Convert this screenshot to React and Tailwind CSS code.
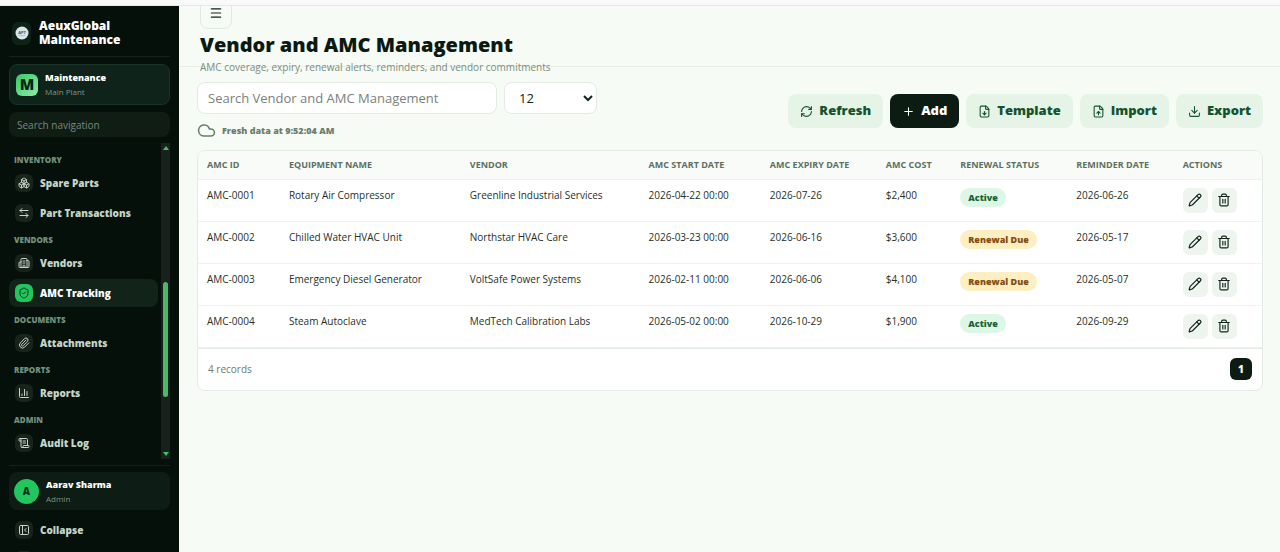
import {
  ArrowLeftRight,
  Boxes,
  Building2,
  ChartColumn,
  Cloud,
  Download,
  FileDown,
  FileUp,
  LogOut,
  Menu,
  PanelLeftClose,
  Paperclip,
  Pencil,
  Plus,
  RefreshCw,
  ScrollText,
  ShieldCheck,
  Trash2,
} from "lucide-react";

const groups = [
  {
    title: "Inventory",
    items: [
      { name: "Spare Parts", icon: Boxes },
      { name: "Part Transactions", icon: ArrowLeftRight },
    ],
  },
  {
    title: "Vendors",
    items: [
      { name: "Vendors", icon: Building2 },
      { name: "AMC Tracking", icon: ShieldCheck, active: true },
    ],
  },
  { title: "Documents", items: [{ name: "Attachments", icon: Paperclip }] },
  { title: "Reports", items: [{ name: "Reports", icon: ChartColumn }] },
  { title: "Admin", items: [{ name: "Audit Log", icon: ScrollText }] },
];

const columns = [
  { name: "AMC ID", width: "w-[7.7%]" },
  { name: "Equipment Name", width: "w-[17%]" },
  { name: "Vendor", width: "w-[16.8%]" },
  { name: "AMC Start Date", width: "w-[11.4%]" },
  { name: "AMC Expiry Date", width: "w-[10.9%]" },
  { name: "AMC Cost", width: "w-[7%]" },
  { name: "Renewal Status", width: "w-[10.9%]" },
  { name: "Reminder Date", width: "w-[10%]" },
  { name: "Actions", width: "w-[8.3%]" },
];

const rows = [
  ["AMC-0001", "Rotary Air Compressor", "Greenline Industrial Services", "2026-04-22 00:00", "2026-07-26", "$2,400", "Active", "2026-06-26"],
  ["AMC-0002", "Chilled Water HVAC Unit", "Northstar HVAC Care", "2026-03-23 00:00", "2026-06-16", "$3,600", "Renewal Due", "2026-05-17"],
  ["AMC-0003", "Emergency Diesel Generator", "VoltSafe Power Systems", "2026-02-11 00:00", "2026-06-06", "$4,100", "Renewal Due", "2026-05-07"],
  ["AMC-0004", "Steam Autoclave", "MedTech Calibration Labs", "2026-05-02 00:00", "2026-10-29", "$1,900", "Active", "2026-09-29"],
];

function NavItem({ name, icon: Icon, active, iconOnly }) {
  return (
    <a
      href="#"
      aria-label={name}
      className={`flex h-7 items-center gap-[7px] rounded-lg pl-1.5 text-[10px] font-extrabold ${
        active ? "bg-[#12241a] text-white" : "text-[#c3d5c8]"
      }`}
    >
      <span
        className={`flex size-[18px] items-center justify-center rounded-md ${
          active ? "bg-[#22c55e] text-[#06351a]" : "bg-[#18231c] text-[#c3d5c8]"
        }`}
      >
        <Icon className="size-3" />
      </span>
      {!iconOnly && name}
    </a>
  );
}

function Sidebar() {
  return (
    <aside className="flex w-[179px] shrink-0 flex-col overflow-hidden bg-[#041009] px-[9px]">
      <div className="flex h-[51px] shrink-0 items-center gap-2 border-b border-[#12231a] pt-1 pl-[3px]">
        <span className="flex h-[23px] w-[19px] items-center justify-center rounded-md bg-[#0f2219]">
          <svg viewBox="0 0 14 14" className="size-[14px]">
            <circle cx="7" cy="7" r="6.5" fill="#dbe6e6" />
            <text x="7" y="8" textAnchor="middle" fontSize="4" fontWeight="700" fill="#35566b">
              APT
            </text>
            <path d="M3.5 9.5h7" stroke="#9db3b5" strokeWidth="0.7" />
          </svg>
        </span>
        <p className="text-[12px] leading-[14px] font-extrabold text-white">
          AeuxGlobal
          <br />
          Maintenance
        </p>
      </div>

      <div className="mt-[7px] flex h-[41px] shrink-0 items-center gap-[7px] rounded-lg border border-[#1a3326] bg-[#10231a] pl-1.5">
        <span className="flex size-[22px] items-center justify-center rounded-md bg-linear-to-br from-[#30c965] to-[#8ceaa9] text-[15px] font-extrabold text-[#06251a]">
          M
        </span>
        <div>
          <p className="text-[9px] leading-[14px] font-extrabold text-white">Maintenance</p>
          <p className="text-[8px] leading-[13px] text-[#7f9586]">Main Plant</p>
        </div>
      </div>

      <input
        type="text"
        aria-label="Search navigation"
        placeholder="Search navigation"
        className="mt-[7px] h-[25px] w-full shrink-0 rounded-lg bg-[#0f1d15] px-2 text-[10px] text-white placeholder:text-[#7c887f]"
      />

      <div className="mt-1.5 flex h-[316px] shrink-0 gap-[3px]">
        <nav className="flex-1 overflow-hidden pt-[7px]">
          {groups.map((group) => (
            <div key={group.title}>
              <h2 className="h-[19px] pl-[5px] text-[8px] leading-5 font-extrabold text-[#72907c] uppercase">
                {group.title}
              </h2>
              <div className="space-y-0.5 pb-[3px]">
                {group.items.map((item) => (
                  <NavItem key={item.name} {...item} />
                ))}
              </div>
            </div>
          ))}
        </nav>
        {/* Scroll bar */}
        <div className="flex w-[9px] flex-col items-center bg-[#18211b] py-[3px]">
          <span className="border-x-[3px] border-b-4 border-x-transparent border-b-[#4fb866]" />
          <span className="mt-[132px] h-[115px] w-[5px] rounded-full bg-[#4fb866]" />
          <span className="mt-auto border-x-[3px] border-t-4 border-x-transparent border-t-[#3fc463]" />
        </div>
      </div>

      <div className="mt-1.5 shrink-0 border-t border-[#12231a] pt-1.5">
        <div className="flex h-[38px] items-center gap-[7px] rounded-lg bg-[#0d1c14] pl-[5px]">
          <span className="flex size-[25px] items-center justify-center rounded-full bg-[#22c55e] text-[10px] font-extrabold text-[#06351a]">
            A
          </span>
          <div>
            <p className="text-[9px] leading-[14px] font-extrabold text-white">Aarav Sharma</p>
            <p className="text-[8px] leading-[13px] text-[#7f9586]">Admin</p>
          </div>
        </div>
        <div className="mt-1.5 space-y-0.5">
          <NavItem name="Collapse" icon={PanelLeftClose} />
          <NavItem name="Logout" icon={LogOut} iconOnly />
        </div>
      </div>
    </aside>
  );
}

function ToolButton({ icon: Icon, dark, children }) {
  return (
    <button
      type="button"
      className={`flex h-[34px] items-center gap-1.5 rounded-lg px-3 text-[13px] font-extrabold ${
        dark ? "bg-[#0d1c13] text-white" : "bg-[#e6f4e8] text-[#14532d]"
      }`}
    >
      <Icon className="size-[13px]" />
      {children}
    </button>
  );
}

function StatusBadge({ status }) {
  return (
    <span
      className={`block w-fit rounded-full px-2 text-[9px] leading-[19px] font-extrabold ${
        status === "Active" ? "bg-[#dcf7e5] text-[#166534]" : "bg-[#feefc3] text-[#854d0e]"
      }`}
    >
      {status}
    </span>
  );
}

function AmcTable() {
  return (
    <section className="mt-2.5 overflow-hidden rounded-lg border border-[#e3ebe4] bg-white">
      <table className="w-full table-fixed text-left">
        <thead className="bg-[#f9fbf9]">
          <tr className="h-7 border-b border-[#edf2ed]">
            {columns.map((col) => (
              <th
                key={col.name}
                className={`${col.width} pl-[9px] text-[9px] font-bold whitespace-nowrap text-[#5c7062] uppercase`}
              >
                {col.name}
              </th>
            ))}
          </tr>
        </thead>
        <tbody className="text-[10px] leading-[14px] text-[#26302a]">
          {rows.map((row) => (
            <tr key={row[0]} className="h-[42px] border-b border-[#f0f4f0] align-top">
              {row.map((cell, i) => (
                <td key={i} className="pt-2 pl-[9px] whitespace-nowrap">
                  {i === 6 ? <StatusBadge status={cell} /> : cell}
                </td>
              ))}
              <td className="pt-2 pl-[9px]">
                <div className="flex gap-1">
                  <button
                    type="button"
                    aria-label={`Edit ${row[0]}`}
                    className="flex size-[25px] items-center justify-center rounded-md bg-[#edf5ee] text-[#14241a]"
                  >
                    <Pencil className="size-[14px]" />
                  </button>
                  <button
                    type="button"
                    aria-label={`Delete ${row[0]}`}
                    className="flex size-[25px] items-center justify-center rounded-md bg-[#edf5ee] text-[#14241a]"
                  >
                    <Trash2 className="size-[14px]" />
                  </button>
                </div>
              </td>
            </tr>
          ))}
        </tbody>
      </table>
      <footer className="flex h-[42px] items-center justify-between border-t border-[#e3ebe4] px-2.5 text-[10px] text-[#6b7d70]">
        4 records
        <button
          type="button"
          className="size-[22px] rounded-md bg-[#0d1c13] text-[10px] font-extrabold text-white"
        >
          1
        </button>
      </footer>
    </section>
  );
}

export default function App() {
  return (
    <div className="flex h-screen flex-col overflow-hidden bg-[#f6fbf5] font-['Open_Sans','Noto_Sans',sans-serif]">
      <div className="z-10 h-1.5 shrink-0 border-b border-[#e8e8e8] bg-[#f9f9f9]" />
      <div className="flex min-h-0 flex-1">
        <Sidebar />
        <main className="min-w-0 flex-1">
          <header className="flex h-[61px] items-center border-b border-[#e6eee6] pl-[21px]">
            <div>
              <button
                type="button"
                aria-label="Toggle menu"
                className="flex size-8 items-center justify-center rounded-lg border border-[#e1e9e2] text-[#14241a]"
              >
                <Menu className="size-[14px]" />
              </button>
              <h1 className="mt-0.5 text-[20px] leading-7 font-extrabold text-[#0b1a11]">
                Vendor and AMC Management
              </h1>
              <p className="text-[10px] leading-4 text-[#7d8b81]">
                AMC coverage, expiry, renewal alerts, reminders, and vendor commitments
              </p>
            </div>
          </header>

          <div className="pt-[15px] pr-[17px] pl-[18px]">
            <div className="flex items-center justify-between">
              <div>
                <div className="flex gap-[7px]">
                  <input
                    type="text"
                    aria-label="Search Vendor and AMC Management"
                    placeholder="Search Vendor and AMC Management"
                    className="h-8 w-[300px] rounded-lg border border-[#e3ebe4] bg-white px-2.5 text-[13px] placeholder:text-[#7b7f7c]"
                  />
                  <select
                    aria-label="Rows per page"
                    defaultValue="12"
                    className="h-8 w-[93px] rounded-lg border border-[#e3ebe4] bg-white pl-2.5 text-[13px] text-[#14241a]"
                  >
                    <option>12</option>
                    <option>24</option>
                    <option>48</option>
                  </select>
                </div>
                <p className="mt-[7px] flex h-[19px] items-center gap-1.5 text-[9px] font-extrabold text-[#6b7d70]">
                  <Cloud className="size-[19px]" />
                  Fresh data at 9:52:04 AM
                </p>
              </div>
              <div className="flex gap-[7px]">
                <ToolButton icon={RefreshCw}>Refresh</ToolButton>
                <ToolButton icon={Plus} dark>
                  Add
                </ToolButton>
                <ToolButton icon={FileDown}>Template</ToolButton>
                <ToolButton icon={FileUp}>Import</ToolButton>
                <ToolButton icon={Download}>Export</ToolButton>
              </div>
            </div>
            <AmcTable />
          </div>
        </main>
      </div>
    </div>
  );
}
